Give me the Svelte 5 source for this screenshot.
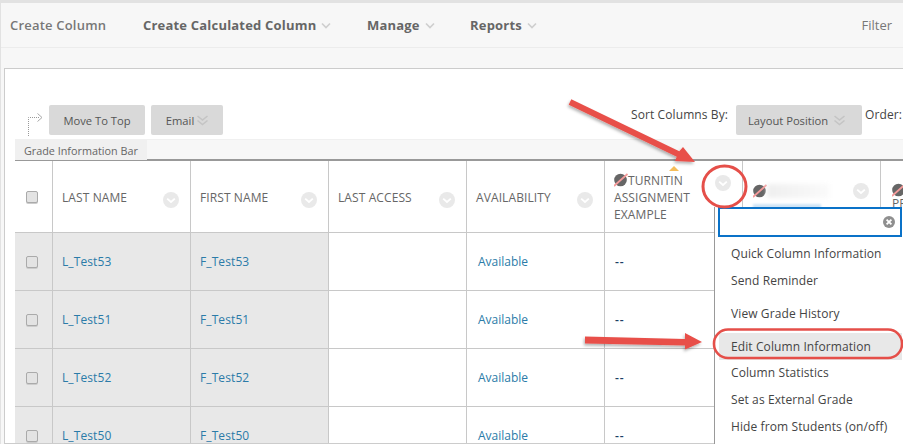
<script>
  const heads = [
    { label: 'LAST NAME' },
    { label: 'FIRST NAME' },
    { label: 'LAST ACCESS' },
    { label: 'AVAILABILITY' }
  ];
  const rows = ['53', '51', '52', '50'];
  const menu = [
    { t: 'Quick Column Information', cls: 'm1' },
    { t: 'Send Reminder', cls: 'm2' },
    { t: 'View Grade History', cls: 'm3' },
    { t: 'Edit Column Information', cls: 'm4' },
    { t: 'Column Statistics', cls: 'm5' },
    { t: 'Set as External Grade', cls: 'm6' },
    { t: 'Hide from Students (on/off)', cls: 'm6' }
  ];
</script>

{#snippet chev()}
  <svg class="chev" width="16" height="16" viewBox="0 0 16 16">
    <circle cx="8" cy="8" r="8" fill="#e9e9e9" />
    <path d="M4.2 6.6 L8 10 L11.8 6.6" fill="none" stroke="#fff" stroke-width="1.8" />
  </svg>
{/snippet}

{#snippet dbl()}
  <svg class="dbl" width="11" height="11" viewBox="0 0 11 11">
    <path d="M0.5 1 L5.5 5 L10.5 1 M0.5 5.5 L5.5 9.5 L10.5 5.5" fill="none" stroke="#c4c4c4" stroke-width="1.6" />
  </svg>
{/snippet}

{#snippet noicon()}
  <svg class="noicon" width="14" height="14" viewBox="0 0 14 14">
    <circle cx="6.5" cy="7" r="6.3" fill="#666" />
    <path d="M0 13 L13.5 1" stroke="#f49a9a" stroke-width="1.8" />
  </svg>
{/snippet}

{#snippet caret()}
  <svg class="caret" width="10" height="7" viewBox="0 0 10 7"><path d="M1 1.5 L5 5.5 L9 1.5" fill="none" stroke="#cfcfcf" stroke-width="1.7" /></svg>
{/snippet}

<div class="page">
  <nav class="nav">
    <span class="n plain">Create Column</span>
    <span class="n calc">Create Calculated Column {@render caret()}</span>
    <span class="n manage">Manage {@render caret()}</span>
    <span class="n reports">Reports {@render caret()}</span>
    <span class="filter">Filter</span>
  </nav>

  <section class="panel">
    <div class="toolbar">
      <svg class="flow" width="16" height="26" viewBox="0 0 16 26">
        <path d="M1.5 26 V7.5 H13" fill="none" stroke="#999" stroke-dasharray="1 1" />
        <path d="M10.5 3.5 L15 7.5 L10.5 11.5" fill="none" stroke="#aaa" />
      </svg>
      <button class="btn top">Move To Top</button>
      <button class="btn email">Email {@render dbl()}</button>
      <span class="sort">Sort Columns By:</span>
      <button class="btn layout">Layout Position {@render dbl()}</button>
      <span class="order">Order:</span>
    </div>

    <div class="bar"><span class="tab">Grade Information Bar</span></div>

    <div class="grid">
      <div class="head check"><span class="cb"></span></div>
      {#each heads as h}
        <div class="head"><span class="lbl">{h.label}</span>{@render chev()}</div>
      {/each}
      <div class="head tii">
        <svg class="tri" width="10" height="5" viewBox="0 0 10 5"><path d="M0 5 L5 0 L10 5 Z" fill="#f5bd5a" /></svg>
        <span class="lbl">{@render noicon()}TURNITIN ASSIGNMENT EXAMPLE</span>{@render chev()}
      </div>
      <div class="head blur">
        <div class="blurred">
          {@render noicon()}
          <span class="smudge"></span>
          <span class="smudge2"></span>
        </div>
        {@render chev()}
      </div>
      <div class="head last">{@render noicon()}<span class="pr">PR</span></div>

      {#each rows as r}
        <div class="cell shade check"><span class="cb"></span></div>
        <div class="cell shade"><span class="link">L_Test{r}</span></div>
        <div class="cell shade"><span class="link">F_Test{r}</span></div>
        <div class="cell"></div>
        <div class="cell"><span class="avail">Available</span></div>
        <div class="cell"><span class="dash">--</span></div>
        <div class="cell"></div>
        <div class="cell last"></div>
      {/each}
    </div>
  </section>

  <div class="menu">
    <div class="search"><svg width="12" height="12" viewBox="0 0 12 12"><circle cx="6" cy="6" r="6" fill="#8f8f8f" /><path d="M3.6 3.6 L8.4 8.4 M8.4 3.6 L3.6 8.4" stroke="#fff" stroke-width="1.8" /></svg></div>
    {#each menu as m}
      <div class="item {m.cls}">{m.t}</div>
    {/each}
  </div>

  <svg class="marks" width="903" height="444" viewBox="0 0 903 444">
    <defs>
      <filter id="sh" x="-10%" y="-30%" width="120%" height="160%"><feDropShadow dx="-1" dy="2" stdDeviation="1.5" flood-color="#000" flood-opacity="0.3" /></filter>
    </defs>
    <path d="M571.3 99.3 L568.7 104.7 L676.7 156.7 L675 161 L695 162 L683 147 L679.3 151.3 Z" fill="#e8504a" filter="url(#sh)" />
    <ellipse cx="724.5" cy="186.5" rx="21.5" ry="20.5" fill="none" stroke="#e54f49" stroke-width="3" />
    <path d="M585 336.5 L585 343.5 L685 345.5 L685 349.5 L702 342 L685 333 L685 339 Z" fill="#e8504a" filter="url(#sh)" />
    <rect x="714" y="329.5" width="188" height="28.5" rx="14" fill="none" stroke="#e54f49" stroke-width="2.6" />
  </svg>
</div>

<style>
  :global(body) { margin: 0; background: #fff; }
  .page {
    position: relative;
    width: 903px;
    height: 444px;
    overflow: hidden;
    box-sizing: border-box;
    background: #f7f7f7;
    border-top: 3px solid #e2e2e2;
    border-left: 1px solid #e2e2e2;
    font-family: "Open Sans", sans-serif;
    font-size: 12px;
    color: #555;
  }
  .nav {
    display: flex;
    align-items: center;
    height: 44px;
    border-bottom: 1px solid #ececec;
    padding-left: 9px;
    font-size: 13px;
    letter-spacing: 0.2px;
    font-weight: 700;
    color: #666;
    box-sizing: content-box;
  }
  .n { white-space: nowrap; display: inline-flex; align-items: center; }
  .caret { margin-left: 5px; margin-top: 1px; }
  .plain { width: 133px; font-weight: 600; color: #777; }
  .calc { width: 224px; }
  .manage { width: 103px; }
  .reports { flex: 1; }
  .filter { font-weight: 400; font-size: 13px; letter-spacing: 0; color: #777; margin-right: 11px; }
  .panel {
    margin: 20px 0 0 3px;
    height: 376px;
    box-sizing: border-box;
    background: #fff;
    border: 1px solid #ccc;
    border-right: 0;
    padding: 36px 0 0 10px;
    overflow: hidden;
  }
  .toolbar {
    display: flex;
    align-items: flex-start;
    height: 33px;
    white-space: nowrap;
  }
  .flow { margin: 5px 6px 0 12px; flex: none; }
  .btn {
    font: inherit;
    font-size: 11.2px;
    color: #555;
    height: 30px;
    border: 0;
    border-radius: 2px;
    background: #d9d9d9;
    padding: 0;
    display: inline-flex;
    align-items: center;
    justify-content: center;
    flex: none;
  }
  .dbl { margin-left: 3px; margin-top: 1px; }
  .top { width: 96px; }
  .email { width: 72px; margin-left: 6px; }
  .sort { margin-left: 408px; font-size: 12px; letter-spacing: 0.1px; color: #444; line-height: 20px; }
  .layout { width: 126px; margin-left: 8px; padding-right: 5px; }
  .layout .dbl { margin-left: 6px; }
  .order { margin-left: 3px; font-size: 12px; letter-spacing: 0.1px; color: #444; line-height: 20px; }
  .bar {
    background: #f7f7f7;
    border-bottom: 2px solid #999;
    border-top: 1px solid #f0f0f0;
    box-sizing: content-box;
    margin-top: 1px;
    height: 19px;
  }
  .tab {
    display: inline-block;
    width: 132px;
    height: 20px;
    line-height: 21px;
    padding-left: 9px;
    box-sizing: border-box;
    background: #f0f0f0;
    font-size: 10.8px;
    color: #666;
    vertical-align: top;
  }
  .grid {
    display: grid;
    grid-template-columns: 38px repeat(6, 138px) 40px;
    grid-auto-rows: 58px;
    grid-template-rows: 72px;
  }
  .head, .cell {
    position: relative;
    box-sizing: border-box;
    border-right: 1px solid #c8c8c8;
    border-bottom: 1px solid #c8c8c8;
    display: flex;
    align-items: center;
    padding-left: 9px;
    min-width: 0;
  }
  .check { padding-left: 11px; }
  .head { justify-content: space-between; padding-right: 11px; color: #666; font-size: 12px; letter-spacing: 0.1px; }
  .check.head { padding-right: 0; }
  .head .lbl { line-height: 17px; margin-top: 1px; }
  .chev { flex: none; margin-top: 7px; }
  .cb {
    width: 10px;
    height: 10px;
    border: 1px solid #aaa;
    border-radius: 2px;
    background: #e3e3e3;
    box-shadow: 0 1px 0 #ccc;
  }
  .shade { background: #e8e8e8; }
  .link { color: #2b7ba8; font-size: 12px; letter-spacing: 0.1px; }
  .avail { color: #2b7ba8; font-size: 12px; margin-left: 2px; }
  .dash { color: #1c3f66; font-size: 12px; font-weight: 600; letter-spacing: 1px; margin-left: 1px; }
  .tii .lbl { width: 90px; margin-top: 2px; }
  .tii .chev { margin-top: -27px; }
  .tri { position: absolute; left: 64px; top: 5px; }
  .noicon { vertical-align: -2px; }
  .blur { padding-left: 10px; }
  .blur .chev { margin-top: -11px; }
  .blurred { position: relative; width: 90px; height: 40px; display: flex; align-items: flex-start; padding-top: 7px; box-sizing: border-box; }
  .smudge { width: 62px; height: 14px; background: linear-gradient(90deg, #efefef, #fafafa); filter: blur(2px); }
  .smudge2 { position: absolute; left: 0; top: 27px; width: 68px; height: 8px; background: #cfe4f5; filter: blur(1px); }
  .last { border-right: 0; padding-left: 11px; flex-direction: column; align-items: flex-start; justify-content: flex-start; padding-top: 22px; overflow: hidden; }
  .pr { font-size: 12px; line-height: 14px; }
  .menu {
    position: absolute;
    left: 713px;
    top: 204px;
    width: 189px;
    height: 240px;
    box-sizing: border-box;
    background: #fff;
    border-left: 1px solid #999;
    padding: 0 0 0 3px;
    color: #444;
    font-size: 12px;
    letter-spacing: 0.1px;
  }
  .search {
    height: 30px;
    box-sizing: border-box;
    margin-right: 1px;
    border: 2px solid #0a72c8;
    display: flex;
    align-items: center;
    justify-content: flex-end;
    padding-right: 5px;
  }
  .item { padding-left: 13px; white-space: nowrap; line-height: 18px; }
  .m1 { margin-top: 8px; }
  .m2 { margin-top: 9px; }
  .m3 { margin-top: 15px; }
  .m4 { margin-top: 10px; background: #e8e8e8; height: 27px; line-height: 27px; margin-left: 1px; margin-right: 1px; padding-left: 12px; }
  .m5 { margin-top: 4px; }
  .m6 { margin-top: 9px; }
  .marks { position: absolute; left: -1px; top: -3px; pointer-events: none; }
</style>
